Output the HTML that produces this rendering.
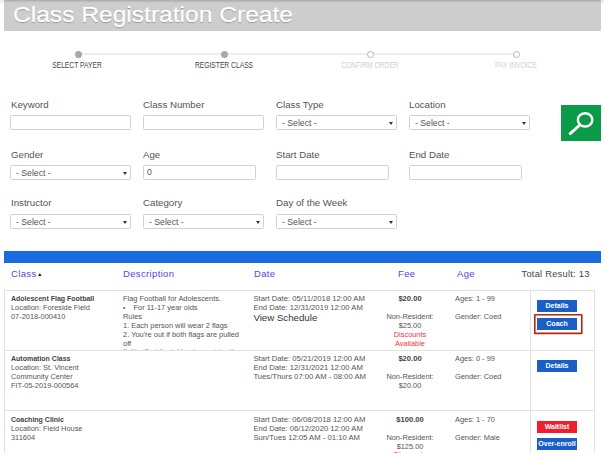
<!DOCTYPE html>
<html><head><meta charset="utf-8">
<style>
*{margin:0;padding:0;box-sizing:border-box}
html,body{width:604px;height:453px;overflow:hidden;background:#fff}
body{position:relative;font-family:"Liberation Sans",sans-serif;color:#333}
.a{position:absolute;white-space:nowrap;line-height:1}
#hdr{position:absolute;left:4px;top:0;width:597px;height:31px;background:linear-gradient(#a9a9a9 0,#c4c4c4 2px,#cdcdcd 3px,#cdcdcd 100%)}
#title{left:12.5px;top:4px;font-size:22px;transform-origin:0 0;transform:scaleX(1.117);-webkit-text-stroke:0.2px #fff;color:#fff;text-shadow:0 1px 1px rgba(0,0,0,.25)}
.sline{position:absolute;top:53px;height:2px;background:#ededed}
.dot{position:absolute;top:50.5px;width:7px;height:7px;border-radius:50%}
.dot.f{background:#a9a9a9}
.dot.e{background:#fff;border:1px solid #b5b5b5}
.step{top:61.5px;font-size:8.2px;transform:translateX(-50%) scaleX(0.82)}
.lbl{font-size:9.7px;color:#555}
.inp{position:absolute;height:15px;border:1px solid #d2d2d2;border-radius:1.5px;background:#fff}
.sel{position:absolute;height:15px;border:1px solid #d2d2d2;border-radius:1.5px;background:#fff;font-size:8.7px;color:#555;line-height:14px;padding-left:5px}
.sel:after{content:"";position:absolute;right:3px;top:5.5px;border-left:2px solid transparent;border-right:2px solid transparent;border-top:3px solid #333}
#srch{position:absolute;left:561px;top:105px;width:40px;height:36px;background:#0a9a48}
#blue{position:absolute;left:4px;top:251px;width:597px;height:12px;background:#1a6ae0}
.th{top:268.7px;font-size:9.5px;letter-spacing:0.35px;color:#5046e5}
#tbl{position:absolute;left:4px;top:290px;width:591px;height:200px;border:1px solid #e2e2e2;border-bottom:none}
.rowline{position:absolute;left:4px;width:591px;height:1px;background:#e2e2e2}
#colline{position:absolute;left:530px;top:290px;width:1px;height:163px;background:#e2e2e2}
.t{font-size:7.4px;color:#555;line-height:9px}
.dt{font-size:7.7px}
.ds{font-size:7.45px}
.b{font-weight:bold;color:#444;font-size:7px}
.fb{font-size:7.6px}
.red{color:#ee3340}
.btn{position:absolute;width:40px;height:12px;color:#fff;font-weight:bold;font-size:7px;text-align:center;line-height:12px;background:#1a5fc7}
</style></head><body>
<div style="position:absolute;left:0;top:0;width:604px;height:5px;background:linear-gradient(rgba(0,0,0,.09),rgba(0,0,0,0))"></div>
<div id="hdr"></div>
<div class="a" id="title">Class Registration Create</div>

<div class="sline" style="left:78px;width:439px"></div>
<div class="dot f" style="left:75px"></div>
<div class="dot f" style="left:221px"></div>
<div class="dot e" style="left:367px"></div>
<div class="dot e" style="left:513px"></div>
<div class="a step" style="left:77px;color:#444">SELECT PAYER</div>
<div class="a step" style="left:223.5px;color:#444">REGISTER CLASS</div>
<div class="a step" style="left:369.5px;color:#cfcfcf">CONFIRM ORDER</div>
<div class="a step" style="left:515.5px;color:#cfcfcf">PAY INVOICE</div>

<div class="a lbl" style="left:11px;top:100px">Keyword</div>
<div class="a lbl" style="left:143px;top:100px">Class Number</div>
<div class="a lbl" style="left:276px;top:100px">Class Type</div>
<div class="a lbl" style="left:409px;top:100px">Location</div>
<div class="inp" style="left:10px;top:115px;width:121px"></div>
<div class="inp" style="left:143px;top:115px;width:121px"></div>
<div class="sel" style="left:276px;top:115px;width:121px">- Select -</div>
<div class="sel" style="left:409px;top:115px;width:121px">- Select -</div>
<div id="srch"><svg width="40" height="36" viewBox="0 0 40 36"><ellipse cx="24.1" cy="14.9" rx="7.2" ry="6.6" fill="none" stroke="#fff" stroke-width="2.4"/><line x1="18.8" y1="20" x2="9.2" y2="28.6" stroke="#fff" stroke-width="2.9" stroke-linecap="round"/></svg></div>

<div class="a lbl" style="left:11px;top:150px">Gender</div>
<div class="a lbl" style="left:143px;top:150px">Age</div>
<div class="a lbl" style="left:276px;top:150px">Start Date</div>
<div class="a lbl" style="left:409px;top:150px">End Date</div>
<div class="sel" style="left:10px;top:165px;width:121px">- Select -</div>
<div class="inp" style="left:143px;top:165px;width:113px;font-size:8.7px;color:#555;line-height:12.5px;padding-left:3px">0</div>
<div class="inp" style="left:276px;top:165px;width:113px"></div>
<div class="inp" style="left:409px;top:165px;width:113px"></div>

<div class="a lbl" style="left:11px;top:198px">Instructor</div>
<div class="a lbl" style="left:143px;top:198px">Category</div>
<div class="a lbl" style="left:276px;top:198px">Day of the Week</div>
<div class="sel" style="left:10px;top:214px;width:121px">- Select -</div>
<div class="sel" style="left:143px;top:214px;width:121px">- Select -</div>
<div class="sel" style="left:276px;top:214px;width:121px">- Select -</div>

<div id="blue"></div>
<div class="a th" style="left:11px">Class</div><svg style="position:absolute;left:37px;top:272px" width="6" height="5"><polygon points="1,3.9 4.6,3.9 2.8,0.9" fill="#222"/></svg>
<div class="a th" style="left:123px">Description</div>
<div class="a th" style="left:254px">Date</div>
<div class="a th" style="left:398px">Fee</div>
<div class="a th" style="left:457px">Age</div>
<div class="a th" style="left:521.5px;color:#444;font-size:9.3px;letter-spacing:0.25px;top:270px">Total Result: 13</div>

<div id="tbl"></div>
<div class="rowline" style="top:350px"></div>
<div class="rowline" style="top:410px"></div>
<div id="colline"></div>

<!-- row 1 -->
<div class="a t" style="left:11px;top:294px"><span class="b">Adolescent Flag Football</span><br>Location: Foreside Field<br>07-2018-000410</div>
<div class="a t ds" style="left:123px;top:294px;height:56px;overflow:hidden">Flag Football for Adolescents.<br><span style="font-size:6.5px;line-height:0">&bull;</span>&nbsp;&nbsp;&nbsp; For 11-17 year olds<br>Rules<br>1. Each person will wear 2 flags<br>2. You're out if both flags are pulled<br>off<br><span style="position:relative;top:-0.7px;color:#999">3. No &lsquo;Tackling&rsquo;. Hands must be if</span></div>
<div class="a t dt" style="left:253.4px;top:294px">Start Date: 05/11/2018 12:00 AM<br>End Date: 12/31/2019 12:00 AM<br><span style="font-size:9.7px;color:#333;position:relative;top:0.8px">View Schedule</span></div>
<div class="a t" style="left:410px;top:294px;transform:translateX(-50%);text-align:center"><span class="b fb">$20.00</span><br><br>Non-Resident:<br>$25.00<br><span class="red">Discounts<br>Available</span></div>
<div class="a t" style="left:455px;top:294px">Ages: 1 - 99<br><br>Gender: Coed</div>
<div class="btn" style="left:537px;top:300px">Details</div>
<div class="btn" style="left:537px;top:318px">Coach</div>
<svg style="position:absolute;left:530px;top:310px" width="60" height="30"><rect x="4.8" y="4.8" width="47" height="18.6" rx="0.4" fill="none" stroke="#b82414" stroke-width="1.6"/></svg>

<!-- row 2 -->
<div class="a t" style="left:11px;top:354.4px"><span class="b">Automation Class</span><br>Location: St. Vincent<br>Community Center<br>FIT-05-2019-000564</div>
<div class="a t dt" style="left:253.4px;top:354.4px">Start Date: 05/21/2019 12:00 AM<br>End Date: 12/31/2021 12:00 AM<br>Tues/Thurs 07:00 AM - 08:00 AM</div>
<div class="a t" style="left:410px;top:354.4px;transform:translateX(-50%);text-align:center"><span class="b fb">$20.00</span><br><br>Non-Resident:<br>$20.00</div>
<div class="a t" style="left:455px;top:354.4px">Ages: 0 - 99<br><br>Gender: Coed</div>
<div class="btn" style="left:537px;top:360px">Details</div>

<!-- row 3 -->
<div class="a t" style="left:11px;top:414.8px"><span class="b">Coaching Clinic</span><br>Location: Field House<br>311604</div>
<div class="a t dt" style="left:253.4px;top:414.8px">Start Date: 06/08/2018 12:00 AM<br>End Date: 06/12/2020 12:00 AM<br>Sun/Tues 12:05 AM - 01:10 AM</div>
<div class="a t" style="left:410px;top:414.8px;transform:translateX(-50%);text-align:center"><span class="b fb">$100.00</span><br><br>Non-Resident:<br>$125.00<br><span class="red" style="position:relative;top:-1px">Discounts<br>Available</span></div>
<div class="a t" style="left:455px;top:414.8px">Ages: 1 - 70<br><br>Gender: Male</div>
<div class="btn" style="left:537px;top:421px;background:#f01e2c">Waitlist</div>
<div class="btn" style="left:537px;top:438px">Over-enroll</div>
</body></html>
